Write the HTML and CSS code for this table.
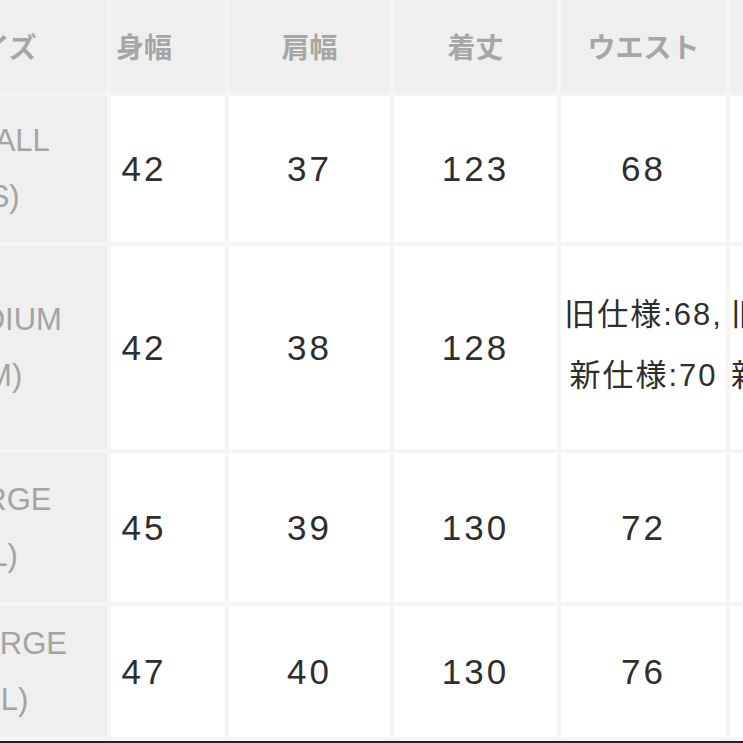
FILE: index.html
```
<!DOCTYPE html>
<html lang="ja">
<head>
<meta charset="utf-8">
<title>サイズ表</title>
<link rel="stylesheet" href="styles.css">
</head>
<body>
<div class="viewport">
  <div class="chart">
    <div class="cell head first">サイズ</div>
    <div class="cell head c1">身幅</div>
    <div class="cell head">肩幅</div>
    <div class="cell head">着丈</div>
    <div class="cell head">ウエスト</div>
    <div class="cell head last"></div>

    <div class="cell size"><span>SMALL</span><span>(S)</span></div>
    <div class="cell num c1">42</div>
    <div class="cell num">37</div>
    <div class="cell num">123</div>
    <div class="cell num">68</div>
    <div class="cell num last"></div>

    <div class="cell size"><span>MEDIUM</span><span>(M)</span></div>
    <div class="cell num c1">42</div>
    <div class="cell num">38</div>
    <div class="cell num">128</div>
    <div class="cell num multi"><span>旧仕様:68,</span><span>新仕様:70</span></div>
    <div class="cell num multi last"><span>旧仕様</span><span>新仕様</span></div>

    <div class="cell size"><span>LARGE</span><span>(L)</span></div>
    <div class="cell num c1">45</div>
    <div class="cell num">39</div>
    <div class="cell num">130</div>
    <div class="cell num">72</div>
    <div class="cell num last"></div>

    <div class="cell size"><span>X-LARGE</span><span>(XL)</span></div>
    <div class="cell num c1">47</div>
    <div class="cell num">40</div>
    <div class="cell num">130</div>
    <div class="cell num">76</div>
    <div class="cell num last"></div>
  </div>
</div>
</body>
</html>
```
FILE: styles.css
```
html, body {
  margin: 0;
  padding: 0;
  background: #f5f5f5;
  overflow: hidden;
}

.viewport {
  width: 743px;
  height: 743px;
  overflow: hidden;
}

.chart {
  display: grid;
  grid-template-columns: 216px 114px 161px 163px 165px 200px;
  grid-template-rows: 92px 146px 203px 149px 131px;
  gap: 4px;
  margin-left: -109px;
  width: 1039px;
  padding-bottom: 4px;
  border-bottom: 2px solid #222;
  background: #f5f5f5;
}

.cell {
  display: flex;
  align-items: center;
  justify-content: center;
  overflow: hidden;
  white-space: nowrap;
}

.head {
  background: #efefef;
  color: #a6a6a6;
  font-family: "Noto Sans CJK JP", sans-serif;
  font-weight: 700;
  font-size: 28px;
}

.head.first {
  padding-right: 8px;
}

.size {
  background: #efefef;
  color: #a4a4a4;
  font-family: "Liberation Sans", "Noto Sans CJK JP", sans-serif;
  font-size: 31px;
  line-height: 56px;
  flex-direction: column;
}

.num {
  background: #fff;
  color: #2e2e2e;
  font-family: "Liberation Sans", "Noto Sans CJK JP", sans-serif;
  font-size: 35px;
  letter-spacing: 3px;
}

.c1 {
  padding-right: 48px;
}

.multi {
  flex-direction: column;
  font-size: 31px;
  letter-spacing: 2px;
  line-height: 61px;
  padding-bottom: 6px;
}

.last {
  justify-content: flex-start;
  align-items: center;
  padding-left: 1px;
}

.multi.last {
  justify-content: center;
  align-items: flex-start;
}
```
